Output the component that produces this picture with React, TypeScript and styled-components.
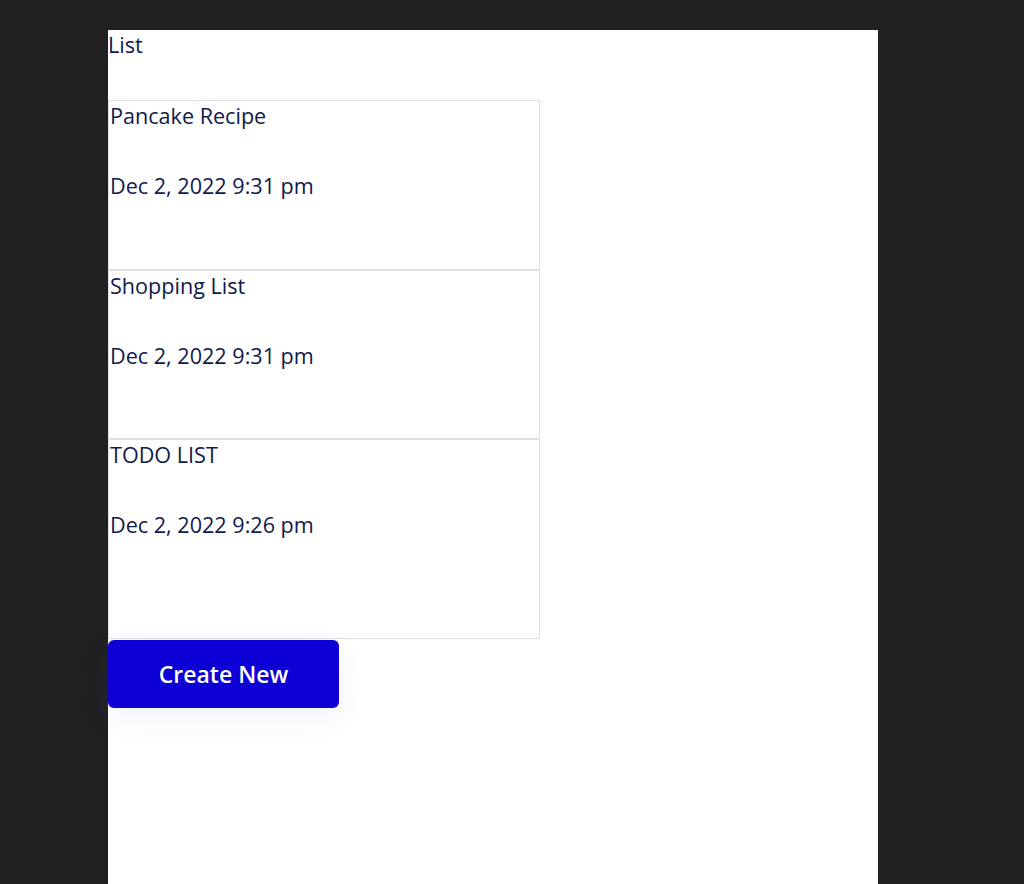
import React from "react";
import styled, { createGlobalStyle } from "styled-components";

const Global = createGlobalStyle`
  html, body {
    margin: 0;
    padding: 0;
    background: #212123;
  }
  body {
    font-family: "Open Sans", "Noto Sans", sans-serif;
  }
`;

const Page = styled.div`
  padding: 30px 0 0 108px;
  min-height: 884px;
  box-sizing: border-box;
  display: flex;
`;

const Panel = styled.main`
  width: 770px;
  min-height: 854px;
  background: #ffffff;
  display: flex;
  flex-direction: column;
  color: #101a4c;
`;

const Title = styled.h1`
  margin: 0;
  font-size: 21.6px;
  font-weight: 400;
  line-height: 30px;
  padding-bottom: 40px;
`;

const CardList = styled.div`
  width: 432px;
  display: flex;
  flex-direction: column;
`;

const Card = styled.div<{ $height: number }>`
  border: 1px solid #dedee6;
  box-sizing: border-box;
  height: ${(p) => p.$height}px;
  padding: 0 0 0 1px;
  display: flex;
  flex-direction: column;
`;

const CardTitle = styled.div`
  font-size: 21.6px;
  line-height: 30px;
`;

const CardDate = styled.div`
  font-size: 21.6px;
  line-height: 30px;
  margin-top: 40px;
`;

const CreateButton = styled.button`
  margin-top: 1px;
  width: 231px;
  height: 68px;
  border: none;
  border-radius: 6px;
  background: #0c00d6;
  color: #ffffff;
  font-family: "Open Sans", "Noto Sans", sans-serif;
  font-size: 23px;
  font-weight: 600;
  box-shadow: 0 10px 30px rgba(60, 60, 220, 0.07);
  cursor: pointer;
`;

const items = [
  { title: "Pancake Recipe", date: "Dec 2, 2022 9:31 pm", height: 170 },
  { title: "Shopping List", date: "Dec 2, 2022 9:31 pm", height: 169 },
  { title: "TODO LIST", date: "Dec 2, 2022 9:26 pm", height: 200 },
];

export default function App() {
  return (
    <>
      <Global />
      <Page>
        <Panel>
          <Title>List</Title>
          <CardList>
            {items.map((it) => (
              <Card key={it.title} $height={it.height}>
                <CardTitle>{it.title}</CardTitle>
                <CardDate>{it.date}</CardDate>
              </Card>
            ))}
          </CardList>
          <CreateButton>Create New</CreateButton>
        </Panel>
      </Page>
    </>
  );
}
